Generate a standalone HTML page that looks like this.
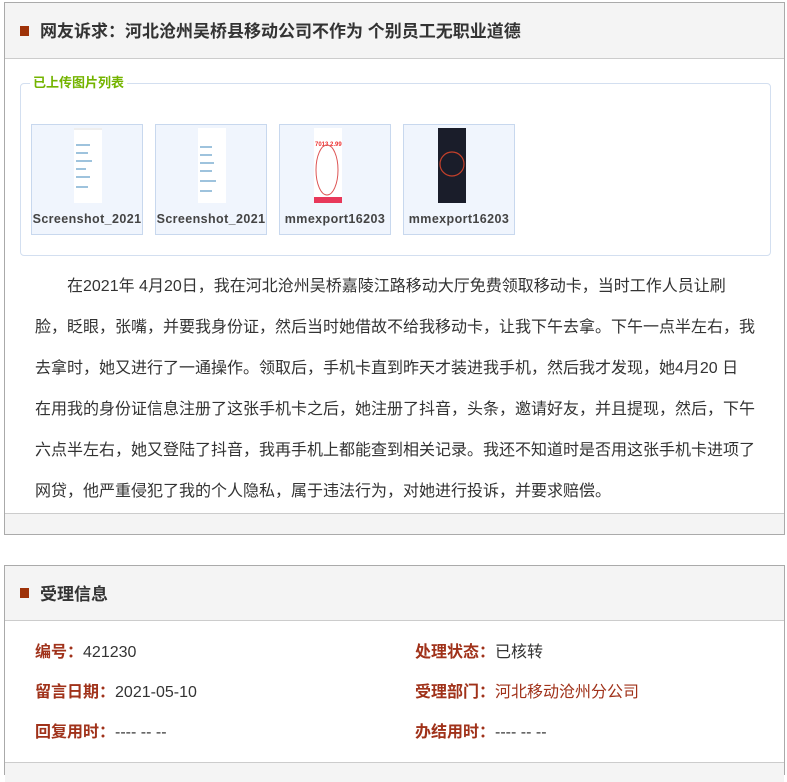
<!DOCTYPE html>
<html><head><meta charset="utf-8">
<style>
*{margin:0;padding:0;box-sizing:border-box}
body{width:787px;height:765px;overflow:hidden;background:#fff;font-family:"Liberation Sans","Noto Sans CJK SC",sans-serif;color:#333;position:relative}
.box{position:absolute;left:4px;width:781px;border:1px solid #aaa;background:#fff}
.hd{height:56px;background:#f4f4f4;border-bottom:1px solid #ccc;position:relative}
.hd .sq{position:absolute;left:15px;top:23px;width:9px;height:10px;background:#9e3208}
.hd h2{position:absolute;left:35px;top:1px;line-height:56px;font-size:17px;font-weight:bold;color:#333}
fieldset{position:absolute;left:15px;top:73px;width:751px;height:180px;border:1px solid #d3dff0;border-radius:4px}
legend{font-size:13px;font-weight:bold;color:#74b400;margin-left:9px;padding:0 3px;line-height:14px}
.th{position:absolute;top:121px;width:112px;height:111px;background:#f0f5fd;border:1px solid #c8d8ee}
.th .img{position:absolute;left:23px;top:3px;width:28px;height:75px}
.th .cap{position:absolute;left:0;right:0;top:87px;text-align:center;font-size:12.5px;font-weight:bold;color:#444;white-space:nowrap;overflow:hidden;letter-spacing:.4px}
.txt{position:absolute;left:30px;top:263px;font-size:16px;line-height:41px;color:#333;white-space:nowrap}
.ft{position:absolute;left:0;right:0;bottom:0;height:21px;background:#f4f4f4;border-top:1px solid #ccc}
.row{position:absolute;font-size:16px;color:#333;white-space:nowrap}
.row b{font-weight:bold;color:#a0321a}
</style></head><body>
<div class="box" style="top:2px;height:533px">
 <div class="hd"><div class="sq"></div><h2>网友诉求：河北沧州吴桥县移动公司不作为 个别员工无职业道德</h2></div>
 <fieldset><legend>已上传图片列表</legend></fieldset>
 <div class="th" style="left:26px"><div class="img" style="left:42px;background:#fff;border-top:2px solid #eee"><svg width="28" height="75"><g fill="#9ec3dd"><rect x="2" y="14" width="14" height="2"/><rect x="2" y="22" width="12" height="2"/><rect x="2" y="30" width="16" height="2"/><rect x="2" y="38" width="10" height="2"/><rect x="2" y="46" width="14" height="2"/><rect x="2" y="56" width="12" height="2"/></g></svg></div><div class="cap">Screenshot_2021</div></div>
 <div class="th" style="left:150px"><div class="img" style="left:42px;background:#fff"><svg width="28" height="75"><g fill="#9ec3dd"><rect x="2" y="18" width="12" height="2"/><rect x="2" y="26" width="12" height="2"/><rect x="2" y="34" width="14" height="2"/><rect x="2" y="42" width="12" height="2"/><rect x="2" y="52" width="16" height="2"/><rect x="2" y="62" width="12" height="2"/></g></svg></div><div class="cap">Screenshot_2021</div></div>
 <div class="th" style="left:274px"><div class="img" style="left:34px;width:28px;background:#fff"><svg width="28" height="75"><text x="1" y="18" font-size="6" fill="#e33" font-weight="bold">7013</text><text x="16" y="18" font-size="6" fill="#e33" font-weight="bold">2.99</text><ellipse cx="13" cy="42" rx="11" ry="25" fill="none" stroke="#d55" stroke-width="1"/><rect x="0" y="69" width="28" height="6" fill="#e8385a"/></svg></div><div class="cap">mmexport16203</div></div>
 <div class="th" style="left:398px"><div class="img" style="left:34px;width:28px;background:#1a1d2a"><svg width="28" height="75"><ellipse cx="14" cy="36" rx="12" ry="12" fill="none" stroke="#c4402a" stroke-width="1.2"/></svg></div><div class="cap">mmexport16203</div></div>
 <div class="txt">　　在2021年 4月20日，我在河北沧州吴桥嘉陵江路移动大厅免费领取移动卡，当时工作人员让刷<br>脸，眨眼，张嘴，并要我身份证，然后当时她借故不给我移动卡，让我下午去拿。下午一点半左右，我<br>去拿时，她又进行了一通操作。领取后，手机卡直到昨天才装进我手机，然后我才发现，她4月20 日<br>在用我的身份证信息注册了这张手机卡之后，她注册了抖音，头条，邀请好友，并且提现，然后，下午<br>六点半左右，她又登陆了抖音，我再手机上都能查到相关记录。我还不知道时是否用这张手机卡进项了<br>网贷，他严重侵犯了我的个人隐私，属于违法行为，对她进行投诉，并要求赔偿。</div>
 <div class="ft"></div>
</div>
<div class="box" style="top:565px;height:210px">
 <div class="hd" style="height:55px"><div class="sq" style="top:22px"></div><h2 style="line-height:55px">受理信息</h2></div>
 <div class="row" style="left:30px;top:72px"><b>编号：</b>421230</div>
 <div class="row" style="left:410px;top:72px"><b>处理状态：</b>已核转</div>
 <div class="row" style="left:30px;top:112px"><b>留言日期：</b>2021-05-10</div>
 <div class="row" style="left:410px;top:112px"><b>受理部门：</b><span style="color:#a0321a">河北移动沧州分公司</span></div>
 <div class="row" style="left:30px;top:152px"><b>回复用时：</b>---- -- --</div>
 <div class="row" style="left:410px;top:152px"><b>办结用时：</b>---- -- --</div>
 <div style="position:absolute;left:0;right:0;top:196px;height:20px;background:#f4f4f4;border-top:1px solid #ccc"></div>
</div>
</body></html>
